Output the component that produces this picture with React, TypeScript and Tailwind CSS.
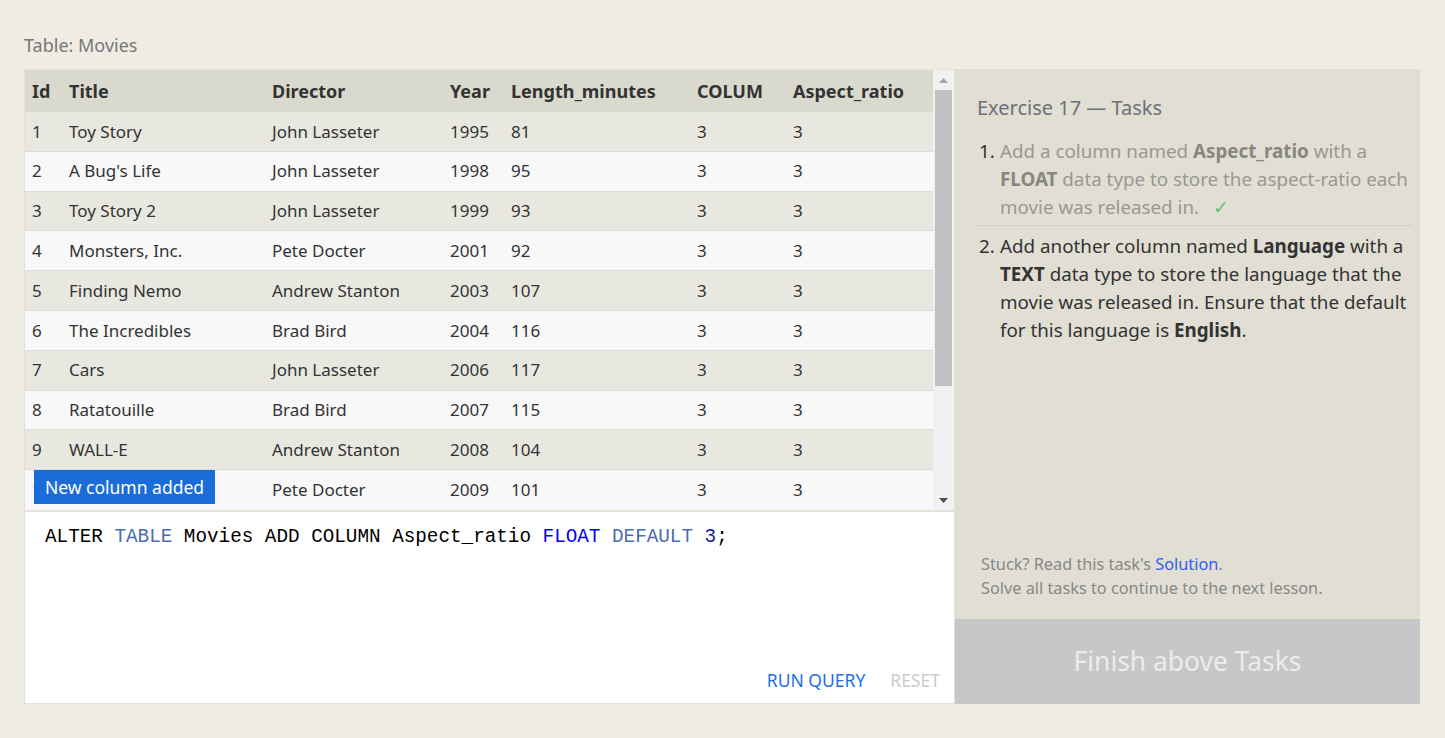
import React from "react";

const rows = [
  [1, "Toy Story", "John Lasseter", 1995, 81],
  [2, "A Bug's Life", "John Lasseter", 1998, 95],
  [3, "Toy Story 2", "John Lasseter", 1999, 93],
  [4, "Monsters, Inc.", "Pete Docter", 2001, 92],
  [5, "Finding Nemo", "Andrew Stanton", 2003, 107],
  [6, "The Incredibles", "Brad Bird", 2004, 116],
  [7, "Cars", "John Lasseter", 2006, 117],
  [8, "Ratatouille", "Brad Bird", 2007, 115],
  [9, "WALL-E", "Andrew Stanton", 2008, 104],
  [10, "Up", "Pete Docter", 2009, 101],
];

const cols = "grid grid-cols-[37px_203px_178px_61px_186px_96px_147px]";
const font = { fontFamily: '"Noto Sans", "Open Sans", sans-serif' };

export default function App() {
  return (
    <div
      className="w-full h-[738px] bg-[#efece4] pt-[32px] pl-[24px] text-[#333]"
      style={font}
    >
      <div className="text-[18px] leading-[26px] text-[#777] mb-[11px]">Table: Movies</div>
      <div className="flex">
        {/* Left panel */}
        <div className="w-[931px] h-[635px] flex flex-col border border-[#e3e1d8] bg-white">
          <div className="relative flex h-[442px] border-b-[2px] border-[#e3e1d8] bg-[#f8f8f8]">
            <div className="w-[908px]">
              <div className={`${cols} h-[41px] bg-[#dad9ce] items-center font-bold text-[18px] text-[#333]`}>
                {["Id", "Title", "Director", "Year", "Length_minutes", "COLUM", "Aspect_ratio"].map((h) => (
                  <div key={h} className="pl-[7px] whitespace-nowrap pt-[1px]">{h}</div>
                ))}
              </div>
              {rows.map((r, i) => (
                <div
                  key={i}
                  className={`${cols} h-[39.8px] items-center border-t border-[#dcdcd6] text-[17px] text-[#333] ${
                    i % 2 === 0 ? "bg-[#e9e8e0]" : "bg-[#f8f8f8]"
                  }`}
                >
                  {[...r, 3, 3].map((c, j) => (
                    <div key={j} className="pl-[7px] whitespace-nowrap">{c}</div>
                  ))}
                </div>
              ))}
            </div>
            {/* scrollbar */}
            <div className="w-[21px] bg-[#f1f1f1] flex flex-col items-center">
              <div className="h-[20px] flex items-center justify-center">
                <svg width="9" height="5" viewBox="0 0 9 5"><path d="M0 5 L4.5 0 L9 5 Z" fill="#a3a3a3" /></svg>
              </div>
              <div className="w-[17px] h-[296px] bg-[#c1c1c1]" />
              <div className="flex-1" />
              <div className="h-[20px] flex items-center justify-center">
                <svg width="9" height="5" viewBox="0 0 9 5"><path d="M0 0 L4.5 5 L9 0 Z" fill="#505050" /></svg>
              </div>
            </div>
            {/* toast */}
            <div className="absolute left-[9px] top-[400px] w-[181px] h-[34px] bg-[#1a6cdb] text-white text-[17.5px] flex items-center justify-center">
              New column added
            </div>
          </div>
          <div className="flex-1 bg-white flex flex-col">
            <div
              className="pl-[20px] pt-[12px] text-[19.3px] leading-[26px] whitespace-pre text-black"
              style={{ fontFamily: '"Liberation Mono", "DejaVu Sans Mono", monospace' }}
            >
              ALTER <span className="text-[#4c6cb3]">TABLE</span> Movies ADD COLUMN Aspect_ratio{" "}
              <span className="text-[#0000ff]">FLOAT</span> <span className="text-[#4c6cb3]">DEFAULT</span>{" "}
              <span className="text-[#1a1aa6]">3</span>;
            </div>
            <div className="flex-1" />
            <div className="flex justify-end gap-[25px] pr-[14px] pb-[10px] text-[17.5px]">
              <span className="text-[#1f6fe6]">RUN QUERY</span>
              <span className="text-[#cccccc]">RESET</span>
            </div>
          </div>
        </div>
        {/* Right panel */}
        <div className="w-[465px] h-[635px] bg-[#e1ded3] flex flex-col">
          <div className="flex-1 pl-[22px] pr-[8px] pt-[26px]">
            <div className="text-[20px] leading-[26px] text-[#6d7078]">Exercise 17 — Tasks</div>
            <ol className="mt-[16px] text-[18.8px] leading-[28px]">
              <li className="flex text-[#9a9891] pb-[4px] border-b border-[#d3d0c5]">
                <span className="w-[23px] pl-[2px] text-[#333]">1.</span>
                <span className="flex-1">
                  Add a column named <b className="text-[#888680]">Aspect_ratio</b> with a{" "}
                  <b className="text-[#888680]">FLOAT</b> data type to store the aspect-ratio each movie was released in.
                  <span className="text-[#6cc27a] ml-[14px]">✓</span>
                </span>
              </li>
              <li className="flex text-[#333] pt-[6px]">
                <span className="w-[23px] pl-[2px]">2.</span>
                <span className="flex-1">
                  Add another column named <b>Language</b> with a <b>TEXT</b> data type to store the language that the
                  movie was released in. Ensure that the default for this language is <b>English</b>.
                </span>
              </li>
            </ol>
          </div>
          <div className="pl-[26px] pb-[19px] text-[16.3px] leading-[24px] text-[#888]">
            <div>
              Stuck? Read this task's <span className="text-[#2f5ff0]">Solution</span>.
            </div>
            <div>Solve all tasks to continue to the next lesson.</div>
          </div>
          <div className="h-[85px] bg-[#c7c7c7] flex items-center justify-center text-[26.4px] text-[#ececec]">
            Finish above Tasks
          </div>
        </div>
      </div>
    </div>
  );
}
